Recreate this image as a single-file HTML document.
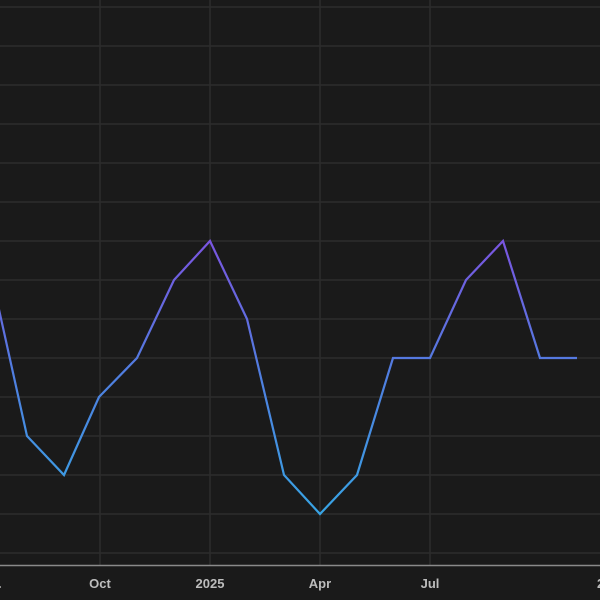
<!DOCTYPE html>
<html><head><meta charset="utf-8"><style>
html,body{margin:0;padding:0;background:#1a1a1a;}
svg{display:block;}
</style></head><body>
<svg width="600" height="600" viewBox="0 0 600 600" xmlns="http://www.w3.org/2000/svg">
<defs>
<linearGradient id="g" gradientUnits="userSpaceOnUse" x1="0" y1="241" x2="0" y2="514">
<stop offset="0" stop-color="#7a55e0"/>
<stop offset="0.5" stop-color="#4f7fe0"/>
<stop offset="1" stop-color="#38a4e4"/>
</linearGradient>
</defs>
<rect width="600" height="600" fill="#1a1a1a"/>
<g stroke="#2c2c2c" stroke-width="1.5">
<line x1="0" y1="7" x2="600" y2="7"/>
<line x1="0" y1="46" x2="600" y2="46"/>
<line x1="0" y1="85" x2="600" y2="85"/>
<line x1="0" y1="124" x2="600" y2="124"/>
<line x1="0" y1="163" x2="600" y2="163"/>
<line x1="0" y1="202" x2="600" y2="202"/>
<line x1="0" y1="241" x2="600" y2="241"/>
<line x1="0" y1="280" x2="600" y2="280"/>
<line x1="0" y1="319" x2="600" y2="319"/>
<line x1="0" y1="358" x2="600" y2="358"/>
<line x1="0" y1="397" x2="600" y2="397"/>
<line x1="0" y1="436" x2="600" y2="436"/>
<line x1="0" y1="475" x2="600" y2="475"/>
<line x1="0" y1="514" x2="600" y2="514"/>
<line x1="0" y1="553" x2="600" y2="553"/>
<line x1="100" y1="0" x2="100" y2="565"/>
<line x1="210" y1="0" x2="210" y2="565"/>
<line x1="320" y1="0" x2="320" y2="565"/>
<line x1="430" y1="0" x2="430" y2="565"/>
</g>
<line x1="0" y1="565.5" x2="600" y2="565.5" stroke="#8a8a8a" stroke-width="1.5"/>
<polyline fill="none" stroke="url(#g)" stroke-width="2.2" stroke-linejoin="miter"
points="-2,305 27,436 64,475 99,397 137,358 174,280 210,241 247,319 284,475 320,514 357,475 393,358 430,358 466,280 503,241 540,358 577,358"/>
<g font-family="Liberation Sans, sans-serif" font-size="13" font-weight="bold" fill="#bdbdbd" text-anchor="middle">
<text x="100" y="588">Oct</text>
<text x="210" y="588">2025</text>
<text x="320" y="588">Apr</text>
<text x="430" y="588">Jul</text>
<text x="597" y="588" text-anchor="start">2</text>
<text x="-2" y="588" text-anchor="start">.</text>
</g>
</svg>
</body></html>
